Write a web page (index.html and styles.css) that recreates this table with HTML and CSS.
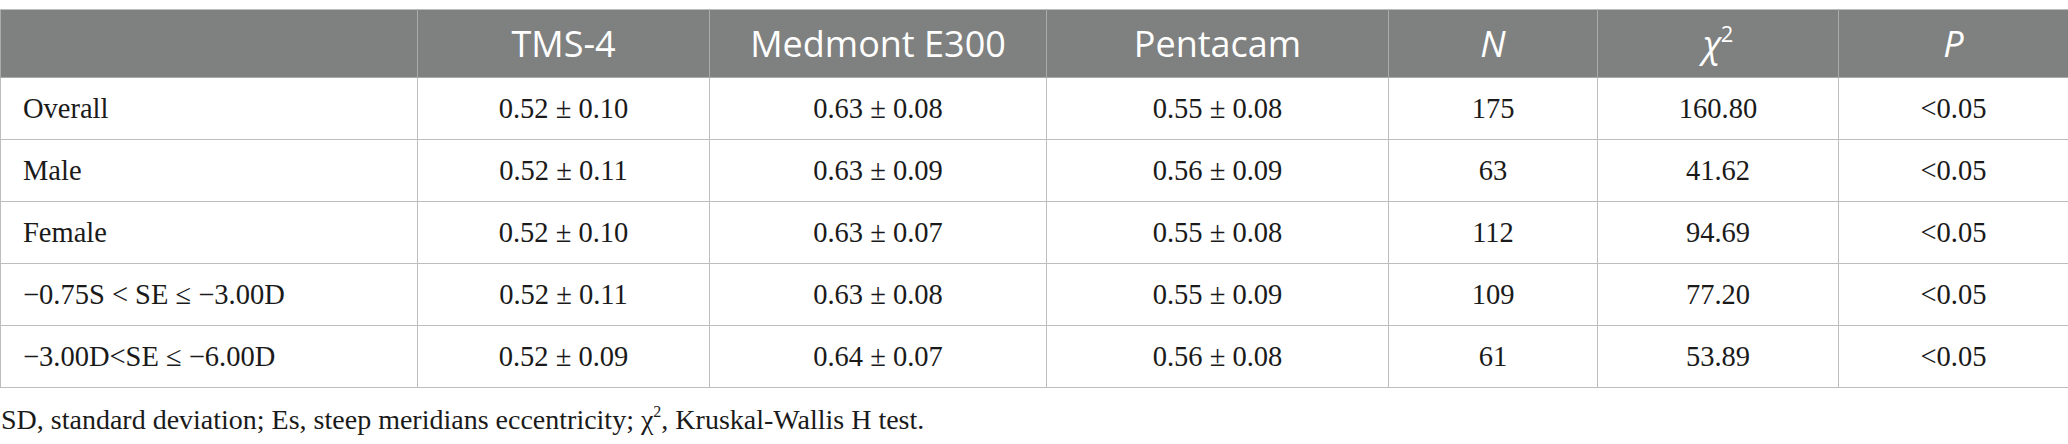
FILE: index.html
```html
<!DOCTYPE html>
<html>
<head>
<meta charset="utf-8">
<link rel="stylesheet" href="styles.css">
</head>
<body>
<div class="page">
  <table class="data">
    <colgroup>
      <col class="c1"><col class="c2"><col class="c3"><col class="c4"><col class="c5"><col class="c6"><col class="c7">
    </colgroup>
    <thead>
      <tr>
        <th></th>
        <th>TMS-4</th>
        <th>Medmont E300</th>
        <th>Pentacam</th>
        <th><i>N</i></th>
        <th><i>χ</i><sup>2</sup></th>
        <th><i>P</i></th>
      </tr>
    </thead>
    <tbody>
      <tr><td class="lbl">Overall</td><td>0.52 ± 0.10</td><td>0.63 ± 0.08</td><td>0.55 ± 0.08</td><td>175</td><td>160.80</td><td>&lt;0.05</td></tr>
      <tr><td class="lbl">Male</td><td>0.52 ± 0.11</td><td>0.63 ± 0.09</td><td>0.56 ± 0.09</td><td>63</td><td>41.62</td><td>&lt;0.05</td></tr>
      <tr><td class="lbl">Female</td><td>0.52 ± 0.10</td><td>0.63 ± 0.07</td><td>0.55 ± 0.08</td><td>112</td><td>94.69</td><td>&lt;0.05</td></tr>
      <tr><td class="lbl">−0.75S &lt; SE ≤ −3.00D</td><td>0.52 ± 0.11</td><td>0.63 ± 0.08</td><td>0.55 ± 0.09</td><td>109</td><td>77.20</td><td>&lt;0.05</td></tr>
      <tr><td class="lbl">−3.00D&lt;SE ≤ −6.00D</td><td>0.52 ± 0.09</td><td>0.64 ± 0.07</td><td>0.56 ± 0.08</td><td>61</td><td>53.89</td><td>&lt;0.05</td></tr>
    </tbody>
  </table>
  <p class="note">SD, standard deviation; Es, steep meridians eccentricity; χ<sup>2</sup>, Kruskal-Wallis H test.</p>
</div>
</body>
</html>
```

FILE: styles.css
```css
html, body {
  margin: 0;
  padding: 0;
  background: #ffffff;
}

.page {
  padding-top: 9px;
  width: 2068px;
}

.data {
  width: 2068px;
  border-collapse: collapse;
  table-layout: fixed;
  font-family: "Liberation Serif", "Times New Roman", serif;
  font-size: 28.5px;
  color: #1a1a1a;
}

.c1 { width: 417px; }
.c2 { width: 292px; }
.c3 { width: 337px; }
.c4 { width: 342px; }
.c5 { width: 209px; }
.c6 { width: 241px; }
.c7 { width: 230px; }

.data th,
.data td {
  border: 1px solid #bdbdbd;
  padding: 0;
  text-align: center;
  vertical-align: middle;
}

.data thead tr {
  height: 68px;
}

.data th {
  background: #7f8180;
  color: #ffffff;
  font-family: "Open Sans", "Noto Sans", sans-serif;
  font-weight: 400;
  font-size: 36px;
  border-color: #a9aaa9;
  border-top-color: #bdbdbd;
}

.data th sup {
  font-size: 22px;
  line-height: 0;
  vertical-align: 15px;
}

.data tbody tr {
  height: 62px;
}

.data td.lbl {
  text-align: left;
  padding-left: 22px;
}

.note {
  margin: 15px 0 0 1px;
  font-family: "Liberation Serif", "Times New Roman", serif;
  font-size: 28px;
  line-height: 34px;
  color: #1a1a1a;
}

.note sup {
  font-size: 16px;
  line-height: 0;
  vertical-align: 12px;
}
```
